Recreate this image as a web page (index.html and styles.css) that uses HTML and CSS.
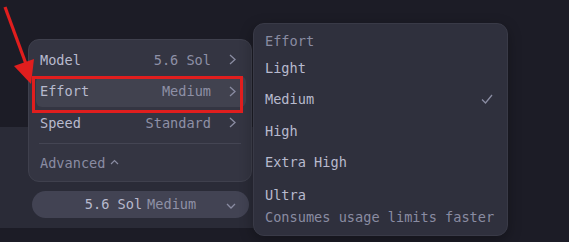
FILE: index.html
```html
<!DOCTYPE html>
<html>
<head>
<meta charset="utf-8">
<link rel="stylesheet" href="styles.css">
</head>
<body>
<div class="page">
  <div class="composer">
    <div class="pill">
      <span class="pill-model">5.6 Sol</span><span class="pill-effort">Medium</span>
      <svg class="pill-chev" width="10" height="6" viewBox="0 0 10 6"><polyline points="1,1 5,5 9,1" fill="none" stroke="#8a8ca2" stroke-width="1.3"/></svg>
    </div>
  </div>

  <div class="menu">
    <div class="row">
      <span class="label">Model</span><span class="value">5.6 Sol</span>
      <svg class="chev" width="7" height="11" viewBox="0 0 7 11"><polyline points="1,1 6,5.5 1,10" fill="none" stroke="#8a8ca2" stroke-width="1.3"/></svg>
    </div>
    <div class="row active">
      <span class="label">Effort</span><span class="value">Medium</span>
      <svg class="chev" width="7" height="11" viewBox="0 0 7 11"><polyline points="1,1 6,5.5 1,10" fill="none" stroke="#8a8ca2" stroke-width="1.3"/></svg>
    </div>
    <div class="row">
      <span class="label">Speed</span><span class="value">Standard</span>
      <svg class="chev" width="7" height="11" viewBox="0 0 7 11"><polyline points="1,1 6,5.5 1,10" fill="none" stroke="#8a8ca2" stroke-width="1.3"/></svg>
    </div>
    <div class="divider"></div>
    <div class="row advanced">
      <span class="adv">Advanced</span>
      <svg class="caret" width="9" height="6" viewBox="0 0 9 6"><polyline points="1,5 4.5,1.5 8,5" fill="none" stroke="#8a8ca2" stroke-width="1.2"/></svg>
    </div>
  </div>

  <div class="submenu">
    <div class="sub-head">Effort</div>
    <div class="sub-item">Light</div>
    <div class="sub-item">Medium
      <svg class="check" width="12" height="10" viewBox="0 0 12 10"><polyline points="1,5.5 4.5,9 11,1" fill="none" stroke="#8a8ca2" stroke-width="1.3"/></svg>
    </div>
    <div class="sub-item">High</div>
    <div class="sub-item">Extra High</div>
    <div class="sub-item ultra">
      <div>Ultra</div>
      <div class="note">Consumes usage limits faster</div>
    </div>
  </div>

  <div class="highlight-box"></div>

  <svg class="arrow" width="40" height="90" viewBox="0 0 40 90">
    <line x1="5" y1="7" x2="26" y2="64" stroke="#e01e1e" stroke-width="3.2"/>
    <polygon points="14,66 34,59 31,84" fill="#e01e1e"/>
  </svg>
</div>
</body>
</html>
```
FILE: styles.css
```css
* { box-sizing: border-box; }
html, body {
  margin: 0;
  padding: 0;
  background: #1c1c26;
}
body {
  font-family: "DejaVu Sans Mono", "Liberation Mono", monospace;
  font-size: 13.6px;
  color: #b8bace;
}
.page {
  position: relative;
  width: 569px;
  height: 242px;
  overflow: hidden;
  padding-top: 127px;
}
.composer {
  width: 280px;
  height: 101px;
  background: #2a2b37;
  padding: 64px 0 0 32px;
}
.pill {
  position: relative;
  width: 217px;
  height: 27px;
  border-radius: 14px;
  background: #424353;
  display: flex;
  align-items: center;
  justify-content: center;
  gap: 5px;
  padding-bottom: 1px;
}
.pill-model { color: #b8bace; }
.pill-effort { color: #8f91a6; }
.pill-chev {
  position: absolute;
  right: 13px;
  top: 12px;
}

.menu {
  position: absolute;
  left: 28px;
  top: 39px;
  width: 224px;
  height: 143px;
  background: #343542;
  border: 1px solid #3f404d;
  border-radius: 11px;
  padding: 4px 5px 0 7px;
  display: flex;
  flex-direction: column;
}
.row {
  height: 31.5px;
  flex-shrink: 0;
  display: flex;
  align-items: center;
  padding: 0 10px 0 4px;
  border-radius: 6px;
}
.row.active { background: #41424f; }
.label { color: #b8bace; }
.value {
  margin-left: auto;
  color: #8e90a6;
}
.chev { margin-left: 18px; }
.divider {
  height: 1px;
  flex-shrink: 0;
  background: #444553;
  margin: 4px 5px 4px 3px;
}
.row.advanced { height: 31px; gap: 5px; }
.adv { color: #8a8ca2; }
.caret { margin-top: -2px; }

.submenu {
  position: absolute;
  left: 253px;
  top: 23px;
  width: 255px;
  height: 213px;
  background: #2f303d;
  border: 1px solid #393a47;
  border-radius: 11px;
  box-shadow: 0 4px 14px rgba(0,0,0,0.3);
  padding: 7px 8px 0 11px;
  display: flex;
  flex-direction: column;
}
.sub-head {
  height: 21px;
  flex-shrink: 0;
  line-height: 20px;
  color: #8a8ca2;
}
.sub-item {
  height: 31.5px;
  flex-shrink: 0;
  display: flex;
  align-items: center;
  color: #b8bace;
  white-space: nowrap;
}
.check { margin-left: auto; margin-right: 6px; }
.sub-item.ultra {
  display: block;
  height: auto;
  padding-top: 7px;
  line-height: 21px;
}
.note { color: #8a8ca2; line-height: 22px; }

.highlight-box {
  position: absolute;
  left: 32px;
  top: 76px;
  width: 211px;
  height: 37px;
  border: 3px solid #e01e1e;
}
.arrow {
  position: absolute;
  left: 0;
  top: 0;
}
```
